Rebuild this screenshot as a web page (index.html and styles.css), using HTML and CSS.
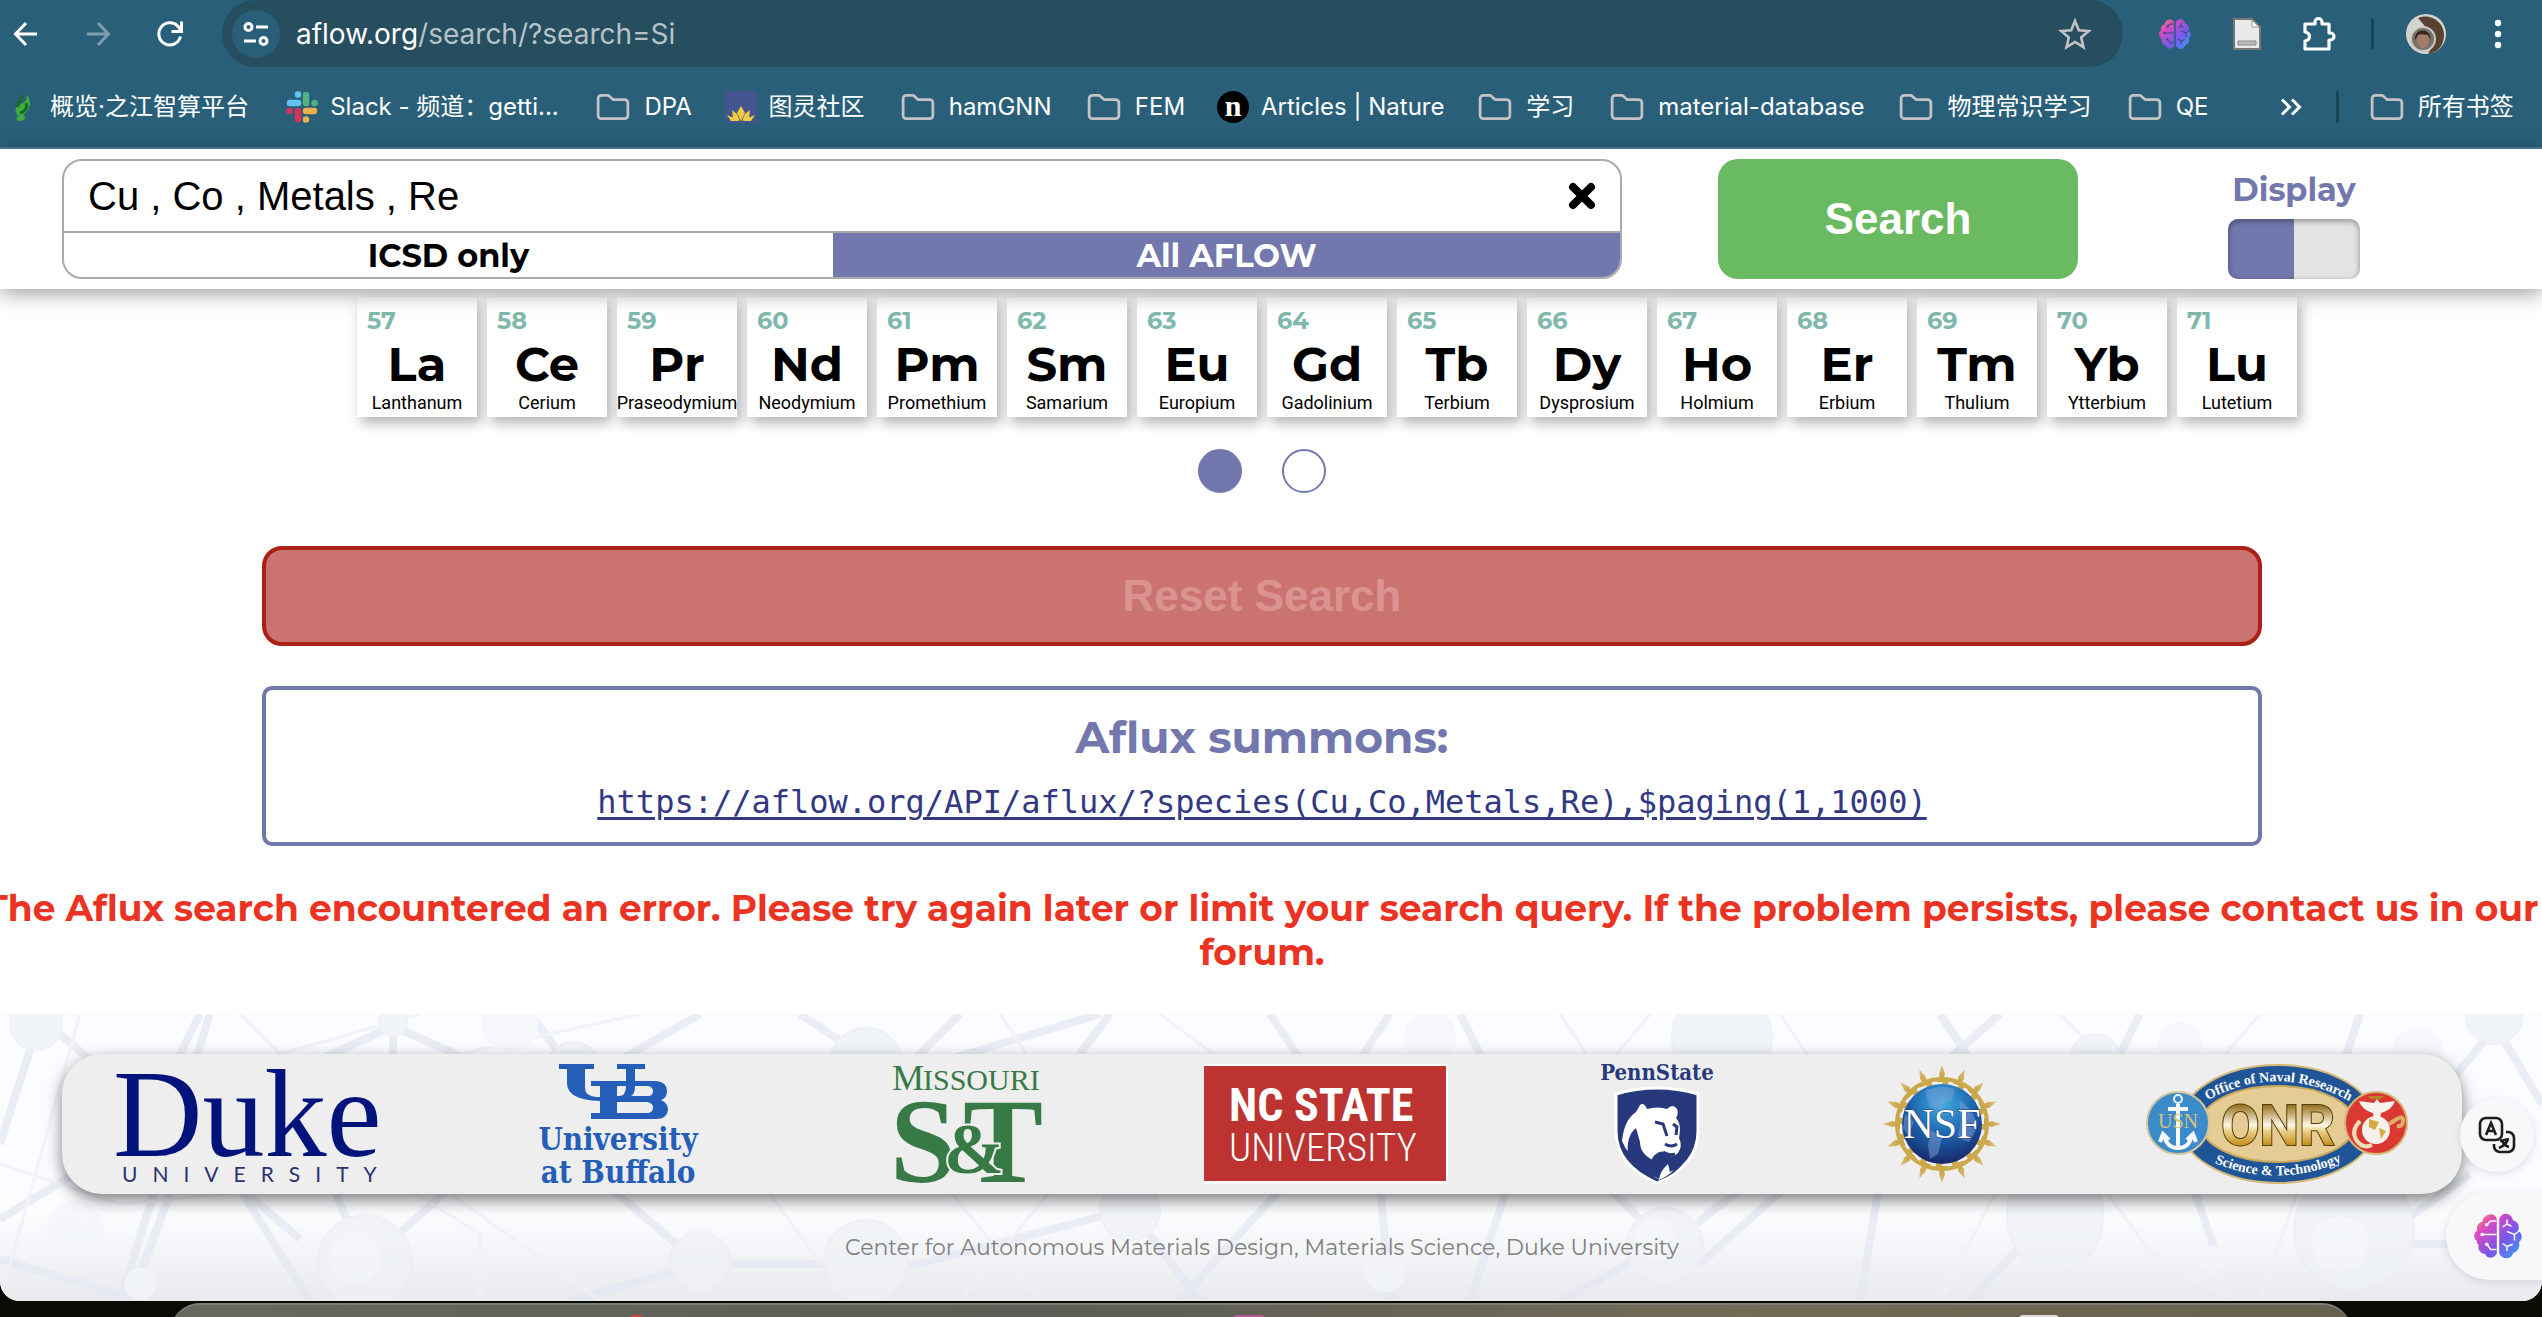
FILE: index.html
```html
<!DOCTYPE html>
<html lang="en">
<head>
<meta charset="utf-8">
<meta name="viewport" content="width=device-width, initial-scale=1">
<title>AFLOW Search</title>
<link rel="stylesheet" href="styles.css">
</head>
<body>
<svg class="defs" aria-hidden="true">
  <defs>
    <linearGradient id="brain-fill" x1="0" y1="0" x2="1" y2="1">
      <stop offset="0" stop-color="#f9a13a"/><stop offset=".25" stop-color="#e04ac0"/>
      <stop offset=".6" stop-color="#7c55ea"/><stop offset="1" stop-color="#35a4f5"/>
    </linearGradient>
    <linearGradient id="gold" gradientUnits="userSpaceOnUse" x1="0" y1="40" x2="0" y2="82">
      <stop offset="0" stop-color="#8f6a12"/><stop offset=".5" stop-color="#fdf8e6"/><stop offset=".65" stop-color="#e9cf85"/><stop offset="1" stop-color="#c48b14"/>
    </linearGradient>
    <linearGradient id="gear-gold" x1="0" y1="0" x2="0" y2="1">
      <stop offset="0" stop-color="#dcc27b"/><stop offset="1" stop-color="#c29a31"/>
    </linearGradient>
    <radialGradient id="globe" cx=".5" cy=".25" r=".8">
      <stop offset="0" stop-color="#3fb0e2"/><stop offset=".5" stop-color="#1c62ae"/><stop offset="1" stop-color="#17215f"/>
    </radialGradient>
  </defs>
  <symbol id="folder" viewBox="0 0 32 26"><path d="M2 5a3 3 0 0 1 3-3h6.500l4.500 4h11a3 3 0 0 1 3 3v12a3 3 0 0 1-3 3H5a3 3 0 0 1-3-3z" fill="none" stroke="#c3c2c5" stroke-width="2.600" stroke-linejoin="round"/></symbol>
  <symbol id="brain" viewBox="0 0 32 32">
    <path fill="url(#brain-fill)" d="M15.200 4.500V27.500C13.500 31.500 8.500 31.500 7.500 28 4 27.500 2.500 25 3 22 1.500 20.500 2 20 2 19.500-.5 17.500-.5 14 2 12.500 1.500 9 3.500 7 5.500 6.500 6.500 1 13.500-.5 15.200 4.500zM16.800 4.500C18.500-.5 25 .5 26 5.500 29.500 6.500 30.500 9 29.500 12.500 32.500 14.500 32.500 18 30 20c.8 3-.5 6.500-4 7.500-1 4.500-7.500 4.500-9.200 0z"/>
    <g fill="none" stroke="currentColor" stroke-width="1"><path d="M15 6h-4l-2 2M15 15H6M15 25h-4l-2-3"/><path d="M22 5v3l-3 2M22 8l3 1.500M31 12l-4 3-5-2M27 15v4M19 21l3 2 4-1.500M22 23v3"/></g>
    <g fill="currentColor"><circle cx="8.500" cy="8.500" r="1.200"/><circle cx="5.500" cy="15" r="1.200"/><circle cx="8.500" cy="21.500" r="1.200"/></g>
  </symbol>
</svg>

<div class="window">
  <div class="toolbar">
    <button class="tool" aria-label="Back"><svg width="26" height="26" viewBox="0 0 26 26"><path d="M24 13H3M13 2L2.500 13 13 24" fill="none" stroke="#fff" stroke-width="3"/></svg></button>
    <button class="tool" aria-label="Forward" disabled><svg width="26" height="26" viewBox="0 0 26 26"><path d="M2 13h21M13 2l10.500 11L13 24" fill="none" stroke="#7d9fae" stroke-width="3"/></svg></button>
    <button class="tool" aria-label="Reload"><svg width="28" height="28" viewBox="0 0 28 28"><path d="M24.500 16.500A11 11 0 1 1 22 6.500l2.500 3" fill="none" stroke="#fff" stroke-width="3"/><path d="M25.500 1.500v10h-10" fill="none" stroke="#fff" stroke-width="3"/></svg></button>
    <div class="address">
      <button class="site-info" aria-label="Site information"><svg width="28" height="28" viewBox="0 0 28 28" fill="none" stroke="#fff" stroke-width="3"><circle cx="6.500" cy="7" r="3.500"/><path d="M14 7h12M2 21h12"/><circle cx="21.500" cy="21" r="3.500"/></svg></button>
      <span class="url" role="textbox" aria-label="Address"><b>aflow.org</b>/search/?search=Si</span>
      <button class="tool" aria-label="Bookmark this page"><svg width="34" height="34" viewBox="0 0 34 34"><path d="M17 4l3.800 9.200 9.900.8-7.500 6.500 2.300 9.700L17 25l-8.500 5.200 2.300-9.700L3.300 14l9.900-.8z" fill="none" stroke="#c3c2c5" stroke-width="2.600"/></svg></button>
    </div>
    <button class="tool dark-lines" aria-label="Brain extension"><svg width="32" height="32"><use href="#brain"/></svg></button>
    <button class="tool" aria-label="Reader extension"><svg width="30" height="32" viewBox="0 0 30 32"><path d="M2 1h18l8 8v22H2z" fill="#e9e9e9" stroke="#777" stroke-width="2"/><path d="M20 2v7h7z" fill="#fff" stroke="#999"/><path d="M6 23h18v4H6z" fill="#bbb" stroke="#8a8a8a"/></svg></button>
    <button class="tool" aria-label="Extensions"><svg width="36" height="36" viewBox="0 0 36 36"><path d="M5 8h9V6a3.500 3.500 0 0 1 7 0v2h7v9h1.500a3.500 3.500 0 0 1 0 7H28v9H4v-8c6-1 6-8 0-9V8z" fill="none" stroke="#fff" stroke-width="3.200" stroke-linejoin="round"/></svg></button>
    <span class="rule"></span>
    <button class="tool" aria-label="Profile"><svg width="40" height="40" viewBox="0 0 40 40"><circle cx="20" cy="20" r="20" fill="#d3d3cd"/><path d="M12 4c10-5 26 2 26 17 0 12-8 18-16 19 6-10 5-20-10-36z" fill="#5a4030"/><circle cx="17" cy="25" r="12" fill="#77736c" stroke="#c9c9c4" stroke-width="2"/><ellipse cx="17" cy="26" rx="6" ry="8" fill="#a47b66"/><path d="M9 26c-1-12 15-13 16 0l-3-5c-4-1-8-1-10 0z" fill="#33261f"/></svg></button>
    <button class="tool" aria-label="Menu"><svg width="8" height="30" viewBox="0 0 8 30" fill="#fff"><circle cx="4" cy="4" r="3.200"/><circle cx="4" cy="15" r="3.200"/><circle cx="4" cy="26" r="3.200"/></svg></button>
  </div>

  <nav class="bookmarks" aria-label="Bookmarks">
    <a href="#"><svg width="32" height="32" viewBox="0 0 32 32"><path d="M14 30c-4 0-5-4-1-5-5-2-5-9 2-12 5-2 6-5 6-9 6 8 2 16-4 20 4 2 2 6-3 6z" fill="#3fae3a"/><path d="M17 4c1 4-6 6-5 12M20 12c2 5-1 9-6 10" fill="none" stroke="#196a2c" stroke-width="3"/></svg><span>概览·之江智算平台</span></a>
    <a href="#"><svg width="32" height="32" viewBox="0 0 32 32" stroke-width="6.500" stroke-linecap="round"><path d="M4 12h8M12 3.500v.1" stroke="#5fc4ee"/><path d="M20 4v8M28.500 12h.1" stroke="#55b183"/><path d="M20 20h8M20 28.500v.1" stroke="#e8b14b"/><path d="M12 20v8M3.500 20h.1" stroke="#d5335e"/></svg><span>Slack - 频道：getti...</span></a>
    <a href="#" class="dir"><svg width="34" height="28"><use href="#folder"/></svg><span>DPA</span></a>
    <a href="#"><svg width="32" height="32" viewBox="0 0 32 32"><path d="M0 0h32v32H0z" fill="#43548e"/><path d="M16 15l4 7-4 8-4-8zM7 19l5 4 3 7-7-3zM25 19l-5 4-3 7 7-3zM2 24l7 3 5 3H6zM30 24l-7 3-5 3h8z" fill="#f3cb42"/></svg><span>图灵社区</span></a>
    <a href="#" class="dir"><svg width="34" height="28"><use href="#folder"/></svg><span>hamGNN</span></a>
    <a href="#" class="dir"><svg width="34" height="28"><use href="#folder"/></svg><span>FEM</span></a>
    <a href="#"><svg width="32" height="32" viewBox="0 0 32 32"><circle cx="16" cy="16" r="16"/><text x="16" y="25" text-anchor="middle" class="nature-n">n</text></svg><span>Articles | Nature</span></a>
    <a href="#" class="dir"><svg width="34" height="28"><use href="#folder"/></svg><span>学习</span></a>
    <a href="#" class="dir"><svg width="34" height="28"><use href="#folder"/></svg><span>material-database</span></a>
    <a href="#" class="dir"><svg width="34" height="28"><use href="#folder"/></svg><span>物理常识学习</span></a>
    <a href="#" class="dir"><svg width="34" height="28"><use href="#folder"/></svg><span>QE</span></a>
    <button class="more" aria-label="More bookmarks"><svg width="22" height="18" viewBox="0 0 22 18"><path d="M2 1.500L9.500 9 2 16.500M12 1.500L19.500 9 12 16.500" fill="none" stroke="#fff" stroke-width="3"/></svg></button>
    <span class="rule"></span>
    <a href="#" class="dir"><svg width="34" height="28"><use href="#folder"/></svg><span>所有书签</span></a>
  </nav>

  <header class="search-header">
    <div class="search-box">
      <div class="query">
        <input type="text" aria-label="Search query" value="Cu , Co , Metals , Re">
        <button class="clear" aria-label="Clear"><svg width="28" height="28" viewBox="0 0 28 28"><path d="M5 5l18 18M23 5L5 23" stroke="#000" stroke-width="8" stroke-linecap="round"/></svg></button>
      </div>
      <div class="scope">
        <button class="scope-icsd">ICSD only</button>
        <button class="scope-all">All AFLOW</button>
      </div>
    </div>
    <button class="search-button">Search</button>
    <div class="display">
      <label for="display-toggle">Display</label>
      <input type="checkbox" id="display-toggle">
    </div>
  </header>

  <main>
    <div class="elements">
      <button><i>57</i><b>La</b><span>Lanthanum</span></button>
      <button><i>58</i><b>Ce</b><span>Cerium</span></button>
      <button><i>59</i><b>Pr</b><span>Praseodymium</span></button>
      <button><i>60</i><b>Nd</b><span>Neodymium</span></button>
      <button><i>61</i><b>Pm</b><span>Promethium</span></button>
      <button><i>62</i><b>Sm</b><span>Samarium</span></button>
      <button><i>63</i><b>Eu</b><span>Europium</span></button>
      <button><i>64</i><b>Gd</b><span>Gadolinium</span></button>
      <button><i>65</i><b>Tb</b><span>Terbium</span></button>
      <button><i>66</i><b>Dy</b><span>Dysprosium</span></button>
      <button><i>67</i><b>Ho</b><span>Holmium</span></button>
      <button><i>68</i><b>Er</b><span>Erbium</span></button>
      <button><i>69</i><b>Tm</b><span>Thulium</span></button>
      <button><i>70</i><b>Yb</b><span>Ytterbium</span></button>
      <button><i>71</i><b>Lu</b><span>Lutetium</span></button>
    </div>
    <div class="pager">
      <input type="radio" name="page" aria-label="Page 1" checked>
      <input type="radio" name="page" aria-label="Page 2">
    </div>
    <button class="reset" disabled>Reset Search</button>
    <section class="summons">
      <h2>Aflux summons:</h2>
      <a href="#">https://aflow.org/API/aflux/?species(Cu,Co,Metals,Re),$paging(1,1000)</a>
    </section>
    <p class="error">The Aflux search encountered an error. Please try again later or limit your search query. If the problem persists, please contact us in our forum.</p>
  </main>

  <footer>
    <svg class="mesh" viewBox="0 0 2542 287" preserveAspectRatio="xMidYMid slice" aria-hidden="true">
      <g fill="none" stroke="#e4e8f3" stroke-width="8">
        <path d="M35 20L0 130M60 20L300 225M210 0L120 287M393 12L300 55M393 12L500 60M393 12V50M530 0L575 60M700 0L570 75M800 0L860 40M0 205L140 120L200 0M0 245L140 287M170 180L130 287M240 175L310 287M365 250L460 165M330 165L365 250M600 165L700 250M700 250H860M570 287L700 250M900 60L960 0M900 60L1100 0"/>
        <path d="M1110 0L1080 40M1270 0L1310 60M1390 0L1350 60M1460 0L1490 60M1130 195L880 260M1130 195L1200 287M1290 165L1230 230L1180 287M1510 165L1470 287M1600 165L1665 230M1665 230L1560 287M1670 230L1760 160M1700 250L1800 160M1380 170L1390 287M1880 165L1860 287M1940 0L1980 60L2050 200L1970 287M2000 0L1920 70M2140 0L2110 60M2190 165L2220 250M2360 0L2340 60M2490 20L2440 80M2500 20L2542 90M2390 230H2542M2470 160L2400 210M2055 200L2180 120"/>
      </g>
      <g fill="none" stroke="#edf1f7" stroke-width="3">
        <path d="M80 0L0 287M240 0L280 40L420 0M460 40L640 0M0 150L120 190L320 170M430 165L600 287M480 287V220L400 170M760 165L820 250M940 165L1040 287M1060 165L960 287M1160 0L1240 60M1000 0L1040 60M1560 0L1600 60L1650 0M1780 0L1820 60M2060 0L2100 40M2260 0L2200 70M1940 287L2000 170M2260 287L2300 170M2100 170L2160 250L2240 287"/>
      </g>
      <g fill="#eef1f6" stroke="#e9edf3" stroke-width="2">
        <circle cx="36" cy="10" r="26"/><circle cx="393" cy="8" r="14"/><circle cx="573" cy="56" r="28"/><circle cx="365" cy="248" r="47"/><circle cx="700" cy="248" r="30"/><circle cx="866" cy="248" r="42"/><circle cx="866" cy="50" r="36"/><circle cx="1130" cy="196" r="30"/><circle cx="1665" cy="232" r="38"/><circle cx="1722" cy="24" r="50"/><circle cx="2095" cy="44" r="24"/><ellipse cx="2055" cy="200" rx="48" ry="60"/><circle cx="2354" cy="216" r="60"/><circle cx="2494" cy="2" r="28"/>
      </g>
      <g fill="#f3f6fa">
        <circle cx="510" cy="10" r="28"/><circle cx="1430" cy="24" r="26"/><circle cx="2418" cy="40" r="26"/><circle cx="2180" cy="30" r="22"/><circle cx="75" cy="215" r="28"/><circle cx="140" cy="270" r="16"/><circle cx="1385" cy="258" r="20"/><circle cx="2212" cy="246" r="14"/><circle cx="355" cy="244" r="26"/><circle cx="1655" cy="225" r="20"/><circle cx="2340" cy="230" r="28"/>
      </g>
    </svg>

    <div class="sponsors">
      <svg width="270" height="120" viewBox="0 0 270 120" role="img" aria-label="Duke University"><text x="-2" y="92" class="duke">Duke</text><text x="7" y="118" class="duke-sub">UNIVERSITY</text></svg>

      <svg width="210" height="120" viewBox="0 0 210 120" role="img" aria-label="University at Buffalo">
        <path fill="#245eb8" fill-rule="evenodd" d="M27 0H62V5H53V24Q53 32 64 33H68V22H59V17H94V5H85V0H113V5H103V17H124Q135 18 135 27Q135 34 129 36Q136 39 136 46Q135 55 124 55H59V49H68V37Q35 36 35 19V5H27ZM85 22H94Q94 32 87 32H85ZM103 22H116Q121 23 121 27Q121 32 116 32H99Q103 30 103 22ZM85 38H115Q121 39 121 43Q121 49 115 49H85Z"/>
        <text x="86" y="86" text-anchor="middle" class="buffalo">University</text><text x="86" y="119" text-anchor="middle" class="buffalo">at Buffalo</text>
      </svg>

      <svg width="164" height="120" viewBox="0 0 164 120" role="img" aria-label="Missouri S&amp;T">
        <g class="missouri"><text x="3" y="26" font-size="36">M</text><text x="34" y="26" font-size="30">ISSOURI</text></g>
        <g class="missouri-st"><text x="1" y="118" font-size="120">S</text><text x="74" y="118" font-size="120">T</text><text x="55" y="109" font-size="72">&amp;</text></g>
      </svg>

      <svg width="252" height="120" viewBox="0 0 252 120" role="img" aria-label="NC State University"><path d="M4 0h244v120H4z" fill="#fff"/><path d="M4 2h242v115H4z" fill="#bd3331"/><text x="29" y="57" class="ncsu-bold">NC STATE</text><text x="29" y="97" class="ncsu-light">UNIVERSITY</text></svg>

      <svg width="133" height="120" viewBox="0 0 133 120" role="img" aria-label="PennState">
        <text x="58" y="16" text-anchor="middle" class="penn">PennState</text>
        <path d="M17 30q41-12 82 0v37q0 34-41 52Q17 101 17 67z" fill="#27397c" stroke="#fff" stroke-width="3"/>
        <path d="M41 41q4-3 7 4 11-3 20 0 6-6 10 0 2 4-1 9 4 4 4 12l-1 8q4 8-1 15-7 6-10 1-7-5-12 0-8 5-2 18 4 6 8 9-12-6-20-15-15-12-20-25 2-21 14-29z" fill="#fff"/>
        <path d="M56 58l8 2 4 12M74 60l4 3-1 8M66 80q6 4 12 0M64 88q6 4 12 2" fill="none" stroke="#27397c" stroke-width="3"/>
        <path d="M29 90q-2-18 8-26l4 14q0 14 18 20l3 18q-20-9-33-26zM61 114q0-8 8-15l2 8 14-9q-8 12-24 18z" fill="#27397c"/>
        <path d="M60 116q1-9 9-16l2 8 4-2q-6 6-15 10z" fill="#fff"/>
      </svg>

      <svg width="121" height="120" viewBox="0 0 121 120" role="img" aria-label="NSF">
        <defs><path id="spike" d="M63 1l3 9-1 4 4 4h-12l4-4-1-4z"/></defs>
        <g fill="url(#gear-gold)">
          <use href="#spike"/><use href="#spike" transform="rotate(22.500 63 60)"/><use href="#spike" transform="rotate(45 63 60)"/><use href="#spike" transform="rotate(67.500 63 60)"/><use href="#spike" transform="rotate(90 63 60)"/><use href="#spike" transform="rotate(112.500 63 60)"/><use href="#spike" transform="rotate(135 63 60)"/><use href="#spike" transform="rotate(157.500 63 60)"/><use href="#spike" transform="rotate(180 63 60)"/><use href="#spike" transform="rotate(202.500 63 60)"/><use href="#spike" transform="rotate(225 63 60)"/><use href="#spike" transform="rotate(247.500 63 60)"/><use href="#spike" transform="rotate(270 63 60)"/><use href="#spike" transform="rotate(292.500 63 60)"/><use href="#spike" transform="rotate(315 63 60)"/><use href="#spike" transform="rotate(337.500 63 60)"/>
        </g>
        <circle cx="63" cy="60" r="45" fill="none" stroke="#cba94b" stroke-width="4"/>
        <circle cx="63" cy="60" r="43" fill="none" stroke="#cba94b" stroke-width="7" stroke-dasharray="6 10.900"/>
        <circle cx="63" cy="60" r="40" fill="url(#globe)"/>
        <path d="M46 27q15-7 30-2l-4 12-9 3 2 8-14-6zM80 36q16 10 18 28l-8 14-12-4 4-18zM52 66l11 8-4 16-8 5-2-14zM26 50l9 8-6 14-5-8z" fill="#7d9fd6" opacity=".5"/>
        <text x="63" y="74" text-anchor="middle" class="nsf">NSF</text>
      </svg>

      <svg width="260" height="120" viewBox="0 0 260 120" role="img" aria-label="Office of Naval Research Science &amp; Technology">
        <defs><path id="onr-top" d="M54 40Q131 -6 209 41"/><path id="onr-bottom" d="M54 93Q131 131 208 91"/></defs>
        <ellipse cx="131" cy="60" rx="98" ry="59" fill="#1f5597" stroke="#d5b878" stroke-width="2"/>
        <ellipse cx="131" cy="60" rx="77" ry="38" fill="#e5cb94" stroke="#c9a85e" stroke-width="2"/>
        <text class="onr-ring"><textPath href="#onr-top" startOffset="50%" text-anchor="middle">Office of Naval Research</textPath></text>
        <text class="onr-ring"><textPath href="#onr-bottom" startOffset="50%" text-anchor="middle">Science &amp; Technology</textPath></text>
        <text x="131" y="81" text-anchor="middle" class="onr">ONR</text>
        <circle cx="31" cy="59" r="31" fill="#3b8bcb" stroke="#d5c79a" stroke-width="2"/>
        <g fill="none" stroke="#f4f6f8" stroke-width="4"><circle cx="31" cy="35" r="4" stroke-width="2"/><path d="M31 40v42M21 45h20M17 70q2 14 14 14t14-14M13 78l3-8 6 6M49 78l-3-8-6 6"/></g>
        <text x="31" y="64" text-anchor="middle" class="usn">USN</text>
        <circle cx="229" cy="59" r="31" fill="#dc3832" stroke="#d5b878" stroke-width="2"/>
        <path d="M213 57q-10 10-3 20 6 8 15 4" fill="none" stroke="#eadfb9" stroke-width="4"/>
        <circle cx="229" cy="66" r="14" fill="#f3f1ea"/><path d="M222 55l10 3-4 8-6-3zM232 64l7 3-5 8z" fill="#d5a93e"/>
        <path d="M221 32h16l-3 3h-10z" fill="#b98524"/>
        <path d="M212 37l15 2 3-4 3 4 15-2q-3 8-11 11l-3 1-1 6h-6l-1-6-3-1q-8-3-11-11z" fill="#f5f3ee"/>
        <path d="M242 60l8-5q6-4 6 2t-6 5" fill="none" stroke="#d9b06a" stroke-width="4"/>
      </svg>
    </div>
    <p class="credit">Center for Autonomous Materials Design, Materials Science, Duke University</p>

    <div class="floaters">
      <button class="translate" aria-label="Translate"><svg width="38" height="38" viewBox="0 0 38 38" fill="none" stroke="#1d1d1d" stroke-width="2.600"><rect x="2" y="2" width="22" height="22" rx="6"/><path d="M8 19l5-12 5 12M10 15h6M28 16h2a6 6 0 0 1 6 6v8a6 6 0 0 1-6 6H22a6 6 0 0 1-6-6v-2M22 25l9-2M30 23q-2 6-9 9M24 25q3 5 7 6"/></svg></button>
      <button class="assistant" aria-label="Assistant"><svg width="48" height="48"><use href="#brain"/></svg></button>
    </div>
  </footer>
</div>

<div class="desktop"><div class="dock"><span class="app red"></span><span class="app pink"></span><span class="app white"></span></div></div>
</body>
</html>
```

FILE: styles.css
```css
* { box-sizing: border-box; }
body {
  margin: 0;
  background: #0a0b05;
  font-family: "Montserrat", "Inter", sans-serif;
  overflow-x: hidden;
}
button { border: 0; padding: 0; margin: 0; background: none; font: inherit; color: inherit; }
.defs { position: absolute; width: 0; height: 0; }
.window { background: #fff; border-radius: 0 0 20px 20px; overflow: hidden; }

/* browser toolbar */
.toolbar {
  display: flex;
  align-items: center;
  gap: 24px;
  height: 67px;
  padding: 0 20px 0 2px;
  background: #2a5f79;
}
.tool { display: grid; place-items: center; width: 48px; height: 48px; flex: none; }
.dark-lines { color: #2a4f79; }
.address {
  display: flex;
  align-items: center;
  flex: 1;
  height: 67px;
  margin: 0 4px;
  padding: 0 24px 0 10px;
  border-radius: 34px;
  background: #264e5f;
}
.site-info { display: grid; place-items: center; width: 48px; height: 48px; border-radius: 50%; background: #2a5f79; }
.url { flex: 1; padding-left: 16px; font: 28px/40px Inter, sans-serif; color: #b5c2c9; }
.url b { font-weight: 400; color: #fff; }
.rule { width: 3px; height: 32px; border-radius: 2px; background: #1c4354; }
.toolbar .rule { margin: 0 4px; }

.bookmarks {
  display: grid;
  grid-template-columns: 280fr 310fr 128fr 176fr 186fr 130fr 261fr 132fr 289fr 228fr 152fr 56fr 34fr 172fr;
  align-items: center;
  height: 82px;
  padding: 0 0 0 6px;
  background: #2a5f79;
  border-bottom: 2px solid #4d8299;
}
.bookmarks a {
  display: flex;
  align-items: center;
  gap: 12px;
  min-width: 0;
  color: #fff;
  text-decoration: none;
  font: 24px/36px Inter, "Noto Sans CJK SC", sans-serif;
  white-space: nowrap;
}
.bookmarks .dir { gap: 14px; }
.bookmarks svg { flex: none; }
.more { display: flex; }
.nature-n { font: bold 30px "Liberation Serif", serif; fill: #fff; }

/* search header */
.search-header {
  position: relative;
  z-index: 1;
  display: flex;
  align-items: flex-start;
  padding: 10px 182px 10px 62px;
  background: #fff;
  box-shadow: 0 4px 20px rgba(0, 0, 0, .4);
}
.search-box { flex: 1; height: 120px; border: 2px solid #aaa; border-radius: 20px; overflow: hidden; }
.query { display: flex; align-items: center; height: 72px; padding: 0 24px; border-bottom: 2px solid #aaa; }
.query input {
  flex: 1;
  border: 0;
  padding: 0;
  outline: 0;
  background: none;
  font: 40px/48px "Liberation Sans", sans-serif;
  color: #000;
}
.clear { display: flex; }
.scope { display: grid; grid-template-columns: 769fr 787fr; height: 44px; font: bold 32px/46px "Montserrat", "Inter", sans-serif; }
.scope-all { background: #7277ad; color: #fff; }
.search-button {
  width: 360px;
  height: 120px;
  margin: 0 150px 0 96px;
  border-radius: 20px;
  background: #6aba62;
  color: #fff;
  font: bold 44px "Liberation Sans", sans-serif;
}
.display { display: flex; flex-direction: column; align-items: center; width: 132px; color: #7277ad; font: bold 32px/40px "Montserrat", "Inter", sans-serif; padding-top: 11px; }
.display input {
  appearance: none;
  width: 132px;
  height: 60px;
  margin: 9px 0 0;
  border-radius: 10px;
  background: linear-gradient(90deg, #7277ad 50%, #e3e3e3 50%);
  box-shadow: inset 0 2px 5px 1px rgba(0, 0, 0, .3);
}

/* results */
main { padding: 8px 18px 0 0; text-align: center; }
.elements { display: grid; grid-template-columns: repeat(18, 120px); gap: 10px; justify-content: center; }
.elements button {
  display: flex;
  flex-direction: column;
  align-items: center;
  height: 120px;
  padding-top: 11px;
  background: #fff;
  box-shadow: 4px 6px 12px rgba(0, 0, 0, .3);
}
.elements button:first-child { grid-column-start: 3; }
.elements i { align-self: flex-start; padding-left: 10px; font: bold 24px/26px "Montserrat", "Inter", sans-serif; color: #80b8ab; }
.elements b { font-size: 48px; line-height: 60px; }
.elements span { font: 18px/18px Roboto, sans-serif; }
.pager { display: flex; justify-content: center; gap: 40px; padding: 32px 0 53px; }
.pager input { appearance: none; width: 44px; height: 44px; margin: 0; border: 2px solid #7277ad; border-radius: 50%; }
.pager input:checked { background: #7277ad; }
.reset, .summons { display: block; width: 2000px; max-width: 90%; margin: 0 auto 40px; }
.reset {
  height: 100px;
  border: 4px solid #ab2017;
  border-radius: 20px;
  background: #cb7371;
  color: #da9391;
  font: bold 44px "Liberation Sans", sans-serif;
}
.summons { height: 160px; padding-top: 20px; border: 4px solid #7277ad; border-radius: 10px; }
.summons h2 { margin: 0; font-size: 44px; line-height: 54px; color: #7277ad; }
.summons a { font: 32px/76px "DejaVu Sans Mono", monospace; color: #323882; text-underline-offset: 4px; }
.error { margin: 0 -16px 40px; font-size: 36px; line-height: 44px; font-weight: 700; color: #eb3323; }

/* footer */
footer { position: relative; height: 287px; padding: 40px 80px 0 62px; background: linear-gradient(#fafcff, #fbfcfe 70%, #e9eaed); }
.mesh { position: absolute; inset: 0; width: 100%; height: 100%; opacity: .7; }
.sponsors {
  position: relative;
  display: flex;
  justify-content: space-between;
  align-items: center;
  height: 140px;
  padding: 0 55px 0 53px;
  border-radius: 40px;
  background: #eee;
  box-shadow: 0 6px 16px rgba(0, 0, 0, .5);
}
.sponsors svg { overflow: visible; }
.credit { position: relative; margin: 39px 0 0; text-align: center; font-size: 22px; line-height: 30px; color: #7f7f7f; }
.duke { font: 124px "Liberation Serif", serif; fill: #02147c; }
.duke-sub { font: 21px Lato, sans-serif; fill: #2b3274; letter-spacing: 15px; }
.buffalo { font: bold 31px "DejaVu Serif Condensed", "DejaVu Serif", serif; fill: #245eb8; }
.missouri { font-family: "Liberation Serif", serif; fill: #387a45; }
.missouri-st { font-family: "Liberation Serif", serif; font-weight: 700; fill: #387a45; stroke: #eee; stroke-width: 4px; paint-order: stroke; }
.ncsu-bold { font: bold 46px "Liberation Sans Narrow", "Roboto Condensed", "Open Sans Condensed", sans-serif; fill: #fff; }
.ncsu-light { font: 300 39px "Roboto Condensed", "Liberation Sans Narrow", sans-serif; fill: #fff; }
.penn { font: bold 22px "DejaVu Serif Condensed", "DejaVu Serif", serif; fill: #27397c; }
.nsf { font: 42px "Liberation Serif", serif; fill: #fff; stroke: #27397c; stroke-width: 1px; paint-order: stroke; }
.onr { font: bold 56px Roboto, sans-serif; fill: url(#gold); stroke: #54400f; stroke-width: 2px; paint-order: stroke; }
.onr-ring { font: bold 14px "Liberation Serif", serif; fill: #fff; }
.usn { font: 20px "Liberation Serif", serif; fill: #d9c27c; }

.floaters { position: absolute; right: 0; top: 84px; display: flex; flex-direction: column; align-items: flex-end; gap: 20px; }
.floaters button { display: grid; place-items: center; background: #f8f8fa; box-shadow: 0 2px 8px rgba(0, 0, 0, .12); color: #fff; }
.translate { width: 74px; height: 74px; margin-right: 8px; border-radius: 50%; }
.floaters .assistant { width: 96px; height: 88px; padding-left: 8px; border-radius: 44px 0 0 44px; }

/* strip of desktop below the window */
.desktop { height: 16px; padding: 2px 190px 0 170px; overflow: hidden; }
.dock {
  display: grid;
  grid-template-columns: 606fr 778fr 330fr;
  height: 60px;
  padding: 10px 0 0 452px;
  border-top: 2px solid #7c7d75;
  border-radius: 36px;
  background: linear-gradient(90deg, #66695d, #5c5d56 40%, #726b56 72%, #66614d);
}
.app { width: 30px; height: 30px; border-radius: 15px; }
.red { background: #d8453a; }
.pink { background: #b85c93; border-radius: 2px; }
.white { width: 40px; background: #ddd; border-radius: 4px; }
```
